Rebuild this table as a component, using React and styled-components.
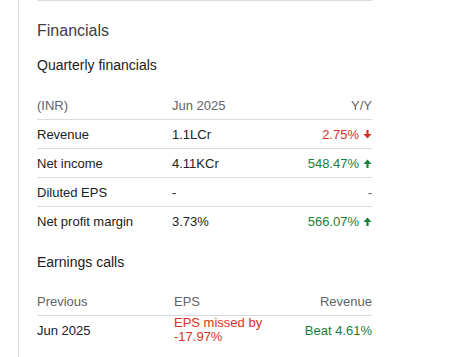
import styled, { createGlobalStyle } from "styled-components";

const GlobalStyle = createGlobalStyle`
    body {
        margin: 0;
        background: #fff;
        font-family: "Liberation Sans", Arial, sans-serif;
        color: #202124;
    }
`;

const quarterly = [
    { label: "Revenue", value: "1.1LCr", change: "2.75%", dir: "down" },
    { label: "Net income", value: "4.11KCr", change: "548.47%", dir: "up" },
    { label: "Diluted EPS", value: "-", change: "-", dir: null },
    { label: "Net profit margin", value: "3.73%", change: "566.07%", dir: "up" },
];

// 굵은 화살표 아이콘: 삼각형 머리 + 막대
function Arrow({ dir }) {
    return (
        <ArrowIcon viewBox="0 0 10 10" aria-hidden="true" $down={dir === "down"}>
            <path d="M5 0.5L9.5 5.5H6.2V10H3.8V5.5H0.5Z" fill="currentColor" />
        </ArrowIcon>
    );
}

function App() {
    return (
        <>
            <GlobalStyle />
            <Page>
                <Rail>
                    <Section>
                        <Title>Financials</Title>
                        <SubTitle>Quarterly financials</SubTitle>
                        <Table>
                            <HeadRow>
                                <Cell>(INR)</Cell>
                                <Cell>Jun 2025</Cell>
                                <Cell $right>Y/Y</Cell>
                            </HeadRow>
                            {quarterly.map((row, i) => (
                                <Row key={row.label} $last={i === quarterly.length - 1}>
                                    <Cell>{row.label}</Cell>
                                    <Cell>{row.value}</Cell>
                                    <Change $dir={row.dir}>
                                        {row.change}
                                        {row.dir && <Arrow dir={row.dir} />}
                                    </Change>
                                </Row>
                            ))}
                        </Table>

                        <SubTitle $second>Earnings calls</SubTitle>
                        <EarningsTable>
                            <HeadRow>
                                <Cell>Previous</Cell>
                                <Cell>EPS</Cell>
                                <Cell $right>Revenue</Cell>
                            </HeadRow>
                            <EarningsRow>
                                <Cell>Jun 2025</Cell>
                                <Wrap $tone="down">EPS missed by -17.97%</Wrap>
                                <Change $dir="up">Beat 4.61%</Change>
                            </EarningsRow>
                        </EarningsTable>
                    </Section>
                </Rail>
            </Page>
        </>
    );
}

export default App;

const Page = styled.div`
    padding-left: 18px;
    min-height: 100vh;
    box-sizing: border-box;
`;

const Rail = styled.div`
    border-left: 1px solid #dadce0;
    min-height: 100vh;
    padding-left: 18px;
`;

const Section = styled.section`
    width: 335px;
    border-top: 1px solid #dadce0;
    padding-top: 18px;
`;

const Title = styled.h2`
    margin: 0;
    font-size: 16px;
    line-height: 24px;
    font-weight: 400;
    color: #3c4043;
`;

const SubTitle = styled.h3`
    margin: ${(props) => (props.$second ? "17px 0 15px" : "12px 0 16px")};
    font-size: 14px;
    line-height: 20px;
    font-weight: 400;
    color: #202124;
`;

const Table = styled.div`
    display: grid;
    grid-template-columns: 135px 1fr auto;
    font-size: 13px;
`;

const EarningsTable = styled.div`
    display: grid;
    grid-template-columns: 137px 100px 1fr;
    font-size: 13px;
`;

const Row = styled.div`
    display: grid;
    grid-column: 1 / -1;
    grid-template-columns: subgrid;
    align-items: center;
    height: 28px;
    border-bottom: ${(props) => (props.$last ? "none" : "1px solid #dadce0")};
`;

const HeadRow = styled(Row)`
    color: #5f6368;
    height: 28px;
    border-bottom: 1px solid #dadce0;
`;

const EarningsRow = styled(Row)`
    height: 28px;
    border-bottom: none;
`;

const Cell = styled.div`
    text-align: ${(props) => (props.$right ? "right" : "left")};
    line-height: 15px;
`;

const Wrap = styled.div`
    line-height: 14px;
    color: ${(props) => (props.$tone === "down" ? "#d93025" : "#188038")};
`;

const Change = styled.div`
    display: flex;
    justify-content: flex-end;
    align-items: center;
    gap: 4px;
    color: ${(props) =>
        props.$dir === "down" ? "#d93025" : props.$dir === "up" ? "#188038" : "#5f6368"};
`;

const ArrowIcon = styled.svg`
    width: 9px;
    height: 9px;
    transform: ${(props) => (props.$down ? "rotate(180deg)" : "none")};
`;
